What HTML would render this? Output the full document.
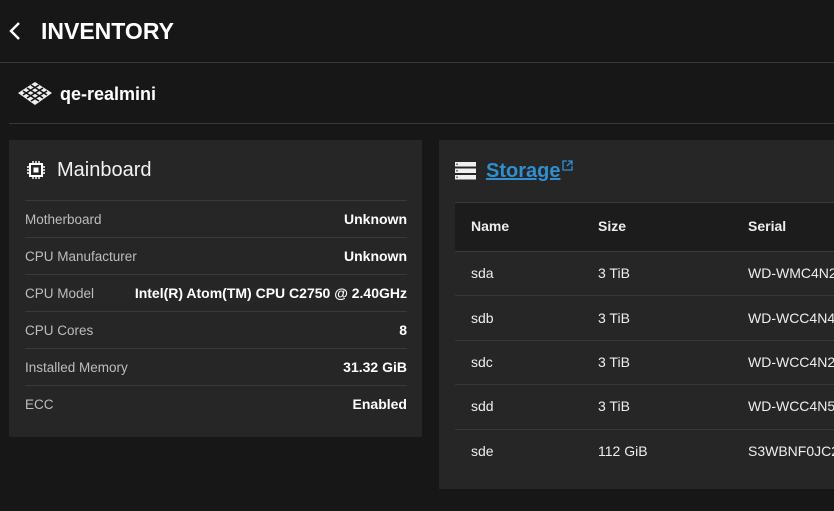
<!DOCTYPE html>
<html><head><style>
*{margin:0;padding:0;box-sizing:border-box}
body{width:834px;height:511px;background:#171717;font-family:"Liberation Sans",sans-serif;color:#fff;position:relative;overflow:hidden;white-space:nowrap}
.abs{position:absolute}
.hr{position:absolute;height:1px;background:#383838}
.lbl{position:absolute;font-size:13.5px;color:#bdbdbd}
.val{position:absolute;font-size:14px;font-weight:bold;color:#fff}
.row{position:absolute;left:16px;width:382px;height:37px;border-top:1px solid #3a3a3a}
.row .val{top:10px}
.row .lbl{top:11px}
.t{position:absolute;font-size:14px;color:#eee;white-space:nowrap}
</style></head><body>
<svg class="abs" style="left:8px;top:21px" width="14" height="20" viewBox="0 0 14 20"><path d="M11 2 L3 10 L11 18" stroke="#fff" stroke-width="2.4" fill="none"/></svg>
<div class="abs" style="left:41px;top:18px;font-size:23px;font-weight:bold">INVENTORY</div>
<div class="hr" style="left:0;top:62px;width:834px"></div>
<svg class="abs" style="left:17px;top:81px" width="36" height="25" viewBox="0 0 36 25">
<path d="M18 1 L35 12 L18 24 L1 12 Z" fill="#eee"/>
<path d="M10 7 L26 17 M26 7 L10 17 M6 10 L22 20 M14 4 L30 14 M30 10 L14 20 M22 4 L6 14" stroke="#171717" stroke-width="1.6"/>
</svg>
<div class="abs" style="left:60px;top:84px;font-size:18px;font-weight:bold">qe-realmini</div>
<div class="hr" style="left:9px;top:123px;width:825px"></div>

<div class="abs" style="left:9px;top:140px;width:413px;height:297px;background:#262626">
<svg class="abs" style="left:18px;top:21px" width="18" height="18" viewBox="0 0 18 18"><rect x="3" y="3" width="12" height="12" fill="none" stroke="#fff" stroke-width="2"/><rect x="6.5" y="6.5" width="5" height="5" fill="#fff"/><path d="M6 0v3M9 0v3M12 0v3M6 15v3M9 15v3M12 15v3M0 6h3M0 9h3M0 12h3M15 6h3M15 9h3M15 12h3" stroke="#fff" stroke-width="1.4"/></svg>
<div class="abs" style="left:48px;top:19px;font-size:20px;color:#f2f2f2">Mainboard</div>
<div class="row" style="top:60px"><span class="lbl" style="left:0">Motherboard</span><span class="val" style="right:0">Unknown</span></div>
<div class="row" style="top:97px"><span class="lbl" style="left:0">CPU Manufacturer</span><span class="val" style="right:0">Unknown</span></div>
<div class="row" style="top:134px"><span class="lbl" style="left:0">CPU Model</span><span class="val" style="right:0">Intel(R) Atom(TM) CPU C2750 @ 2.40GHz</span></div>
<div class="row" style="top:171px"><span class="lbl" style="left:0">CPU Cores</span><span class="val" style="right:0">8</span></div>
<div class="row" style="top:208px"><span class="lbl" style="left:0">Installed Memory</span><span class="val" style="right:0">31.32 GiB</span></div>
<div class="row" style="top:245px"><span class="lbl" style="left:0">ECC</span><span class="val" style="right:0">Enabled</span></div>
</div>

<div class="abs" style="left:439px;top:140px;width:400px;height:349px;background:#262626">
<svg class="abs" style="left:16px;top:22px" width="22" height="18" viewBox="0 0 22 18"><rect x="0" y="0" width="21" height="4.5" fill="#eee"/><rect x="0" y="6.5" width="21" height="4.5" fill="#eee"/><rect x="0" y="13" width="21" height="4.5" fill="#eee"/><path d="M2 1.5v1.5M2 8v1.5M2 14.5v1.5" stroke="#262626" stroke-width="1.2"/></svg>
<div class="abs" style="left:47px;top:20px;font-size:20px;font-weight:bold;color:#2f8fd0;text-decoration:underline">Storage</div>
<svg class="abs" style="left:123px;top:20px" width="11" height="11" viewBox="0 0 11 11"><path d="M5 1H1v9h9V6M6 1h4v4M10 1L5 6" stroke="#2f8fd0" stroke-width="1.3" fill="none"/></svg>
<div class="abs" style="left:16px;top:62px;width:384px;height:50px;background:#1c1c1c;border-top:1px solid #3a3a3a;border-bottom:1px solid #3a3a3a"></div>
<div class="t" style="left:32px;top:78px;font-weight:bold">Name</div>
<div class="t" style="left:159px;top:78px;font-weight:bold">Size</div>
<div class="t" style="left:309px;top:78px;font-weight:bold">Serial</div>
<div class="t" style="left:32px;top:125px">sda</div><div class="t" style="left:159px;top:125px">3 TiB</div><div class="t" style="left:309px;top:125px">WD-WMC4N2</div>
<div class="hr" style="left:16px;top:155px;width:384px"></div>
<div class="t" style="left:32px;top:170px">sdb</div><div class="t" style="left:159px;top:170px">3 TiB</div><div class="t" style="left:309px;top:170px">WD-WCC4N4J</div>
<div class="hr" style="left:16px;top:200px;width:384px"></div>
<div class="t" style="left:32px;top:214px">sdc</div><div class="t" style="left:159px;top:214px">3 TiB</div><div class="t" style="left:309px;top:214px">WD-WCC4N2R</div>
<div class="hr" style="left:16px;top:244px;width:384px"></div>
<div class="t" style="left:32px;top:258px">sdd</div><div class="t" style="left:159px;top:258px">3 TiB</div><div class="t" style="left:309px;top:258px">WD-WCC4N5S</div>
<div class="hr" style="left:16px;top:289px;width:384px"></div>
<div class="t" style="left:32px;top:303px">sde</div><div class="t" style="left:159px;top:303px">112 GiB</div><div class="t" style="left:309px;top:303px">S3WBNF0JC2</div>
</div>
</body></html>
